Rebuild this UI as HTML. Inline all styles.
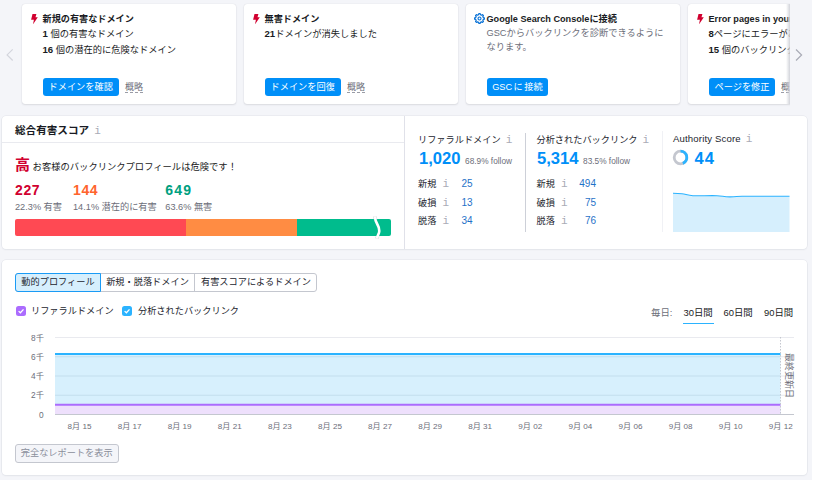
<!DOCTYPE html>
<html lang="ja"><head><meta charset="utf-8">
<style>
*{box-sizing:border-box;margin:0;padding:0}
html,body{width:815px;height:480px;overflow:hidden;background:#f4f5f9;font-family:"Liberation Sans","Noto Sans CJK JP",sans-serif;color:#191b23;font-size:10px}
.abs{position:absolute}
.card{position:absolute;top:4px;height:100.200px;width:214px;background:#fff;border-radius:3px;box-shadow:0 0 1px rgba(25,27,35,.16),0 1px 2px rgba(25,27,35,.10)}
.card .t{position:absolute;left:20.500px;top:8.800px;font-weight:bold;font-size:9.150px;line-height:12px;white-space:nowrap}
.card .l{position:absolute;left:20.500px;margin-top:.4px;font-size:9.250px;line-height:12px;white-space:nowrap}
.card .l b{font-weight:bold;font-size:9.600px}
.card svg.ic{position:absolute;left:8.700px;top:9.700px}
.btn{position:absolute;left:20.700px;top:74.300px;height:18.200px;background:#008ff8;color:#fff;border-radius:3px;font-size:9.200px;line-height:18.200px;padding:0;text-align:center;white-space:nowrap}
.lnk{position:absolute;top:74px;font-size:9px;line-height:18px;color:#6c6e79;white-space:nowrap}
.lnk span{border-bottom:1px dashed #9a9ca6;padding-bottom:0}
.panel{position:absolute;background:#fff;border-radius:4px;box-shadow:0 0 0 .6px #e1e3ea,0 1px 2px rgba(25,27,35,.06)}
.i{color:#a9abb6;font-family:"Liberation Mono",monospace;font-size:11px;line-height:10px;font-weight:normal}
.blue{color:#006dca}
.g{color:#6c6e79}
.num{font-weight:bold;font-size:14px;line-height:16px;white-space:nowrap;letter-spacing:.6px}
.sub{font-size:9.200px;line-height:12px;white-space:nowrap}
.lab{font-size:9.200px;line-height:14px;white-space:nowrap;color:#23252e}
.big{font-size:16.600px;font-weight:bold;line-height:20px;white-space:nowrap;color:#008ff8}
.fol{font-size:8.300px;font-weight:normal;color:#6c6e79;margin-left:4.500px}
.val{font-size:10px;line-height:14px;text-align:right;color:#1f72c8}
.tab{top:273px;text-align:center;font-size:9.200px;line-height:18.500px;white-space:nowrap;color:#23252e}
.per{top:306.400px;font-size:9.400px;line-height:13px;white-space:nowrap}
</style></head><body>
<!-- top cards -->
<div class="card" style="left:22px">
 <svg class="ic" width="7" height="10.500" viewBox="0 0 7 10.500"><path d="M1.500 0H5.400L4.500 3.200H6.800L2 10.400L2.900 5.800H.1z" fill="#d1002f"/></svg>
 <div class="t">新規の有害なドメイン</div>
 <div class="l" style="top:24px"><b>1</b> 個の有害なドメイン</div>
 <div class="l" style="top:40px"><b>16</b> 個の潜在的に危険なドメイン</div>
 <div class="btn" style="width:76px">ドメインを確認</div><div class="lnk" style="left:103px"><span>概略</span></div>
</div>
<div class="card" style="left:244px">
 <svg class="ic" width="7" height="10.500" viewBox="0 0 7 10.500"><path d="M1.500 0H5.400L4.500 3.200H6.800L2 10.400L2.900 5.800H.1z" fill="#d1002f"/></svg>
 <div class="t">無害ドメイン</div>
 <div class="l" style="top:24px"><b>21</b>ドメインが消失しました</div>
 <div class="btn" style="width:76px">ドメインを回復</div><div class="lnk" style="left:103px"><span>概略</span></div>
</div>
<div class="card" style="left:466px">
 <svg class="ic" width="11" height="11" viewBox="0 0 11 11" style="left:8px;top:9.200px"><path d="M4.56 1.72L4.82 0.65L6.18 0.65L6.44 1.72L7.51 2.16L8.45 1.59L9.41 2.55L8.84 3.49L9.28 4.56L10.35 4.82L10.35 6.18L9.28 6.44L8.84 7.51L9.41 8.45L8.45 9.41L7.51 8.84L6.44 9.28L6.18 10.35L4.82 10.35L4.56 9.28L3.49 8.84L2.55 9.41L1.59 8.45L2.16 7.51L1.72 6.44L0.65 6.18L0.65 4.82L1.72 4.56L2.16 3.49L1.59 2.55L2.55 1.59L3.49 2.16Z" fill="none" stroke="#0a72d6" stroke-width="1.250" stroke-linejoin="round"/><circle cx="5.500" cy="5.500" r="1.500" fill="none" stroke="#0a72d6" stroke-width="1.100"/></svg>
 <div class="t">Google Search Consoleに接続</div>
 <div class="l g" style="top:21.800px;line-height:14px;color:#6c6e79">GSCからバックリンクを診断できるように<br>なります。</div>
 <div class="btn" style="width:61.500px;word-spacing:-1px">GSC に 接続</div>
</div>
<div class="card" style="left:688px;width:140px">
 <svg class="ic" width="7" height="10.500" viewBox="0 0 7 10.500"><path d="M1.500 0H5.400L4.500 3.200H6.800L2 10.400L2.900 5.800H.1z" fill="#d1002f"/></svg>
 <div class="t">Error pages in your site</div>
 <div class="l" style="top:24px"><b>8</b>ページにエラーがあります</div>
 <div class="l" style="top:40px"><b>15</b> 個のバックリンクが</div>
 <div class="btn" style="width:66.700px">ページを修正</div><div class="lnk" style="left:93px"><span>概略</span></div>
</div>
<div class="abs" style="left:786.300px;top:4px;width:3.300px;height:100px;background:linear-gradient(90deg,rgba(215,216,222,0) 0,rgba(205,207,214,.9) 100%)"></div><div class="abs" style="left:789.600px;top:0;width:26px;height:108px;background:#f4f5f9"></div>
<div class="abs" style="left:811.800px;top:0;width:4px;height:480px;background:#fff"></div>
<svg class="abs" style="left:6px;top:48px" width="9" height="14" viewBox="0 0 9 14"><path d="M6.700 1.300L1.100 6.900L6.700 12.500" fill="none" stroke="#d3d5dd" stroke-width="1.200"/></svg>
<svg class="abs" style="left:794px;top:48px" width="10" height="14" viewBox="0 0 10 14"><path d="M2 1.500L7.600 7L2 12.500" fill="none" stroke="#a9abb6" stroke-width="1.200"/></svg>

<!-- middle panel -->
<div class="panel" style="left:2px;top:116.300px;width:805.200px;height:132.900px"></div>
<div class="abs" style="left:2px;top:142px;width:402px;height:1px;background:#e9eaef"></div>
<div class="abs" style="left:404px;top:116.300px;width:1px;height:132.900px;background:#e0e1e9"></div>
<div class="abs" style="left:15px;top:122.500px;font-weight:bold;font-size:10.600px;line-height:14px;white-space:nowrap">総合有害スコア<span class="i" style="font-weight:normal;margin-left:5px">i</span></div>
<div class="abs" style="left:15px;top:155px;font-size:9.300px;line-height:20px;white-space:nowrap"><b style="color:#d1002f;font-size:15px">高</b> お客様のバックリンクプロフィールは危険です！</div>
<div class="abs num" style="left:15px;top:182px;color:#d1002f">227</div>
<div class="abs num" style="left:73px;top:182px;color:#ff642d">144</div>
<div class="abs num" style="left:165.300px;top:182px;color:#009f81;letter-spacing:1.200px">649</div>
<div class="abs g sub" style="left:15px;top:201px">22.3% 有害</div>
<div class="abs g sub" style="left:73px;top:201px">14.1% 潜在的に有害</div>
<div class="abs g sub" style="left:165.300px;top:201px">63.6% 無害</div>
<div class="abs" style="left:15px;top:219.200px;width:171px;height:17px;background:#ff4953;border-radius:2px 0 0 2px"></div>
<div class="abs" style="left:186px;top:219.200px;width:111px;height:17px;background:#ff8c43"></div>
<div class="abs" style="left:297px;top:219.200px;width:94px;height:17px;background:#00bc8d;border-radius:0 2px 2px 0"></div>
<svg class="abs" style="left:368px;top:214px" width="18" height="27" viewBox="0 0 18 27"><defs><clipPath id="cp"><rect x="0" y="0" width="18" height="5.200"/><rect x="0" y="22.200" width="18" height="6"/></clipPath></defs><path id="sq" d="M7 2.500C7 10 11.500 10.500 11.300 17C11.200 20 9.500 21 9 24.500" fill="none" stroke="#d0d2d9" stroke-width="3.600" clip-path="url(#cp)"/><path d="M7 2.500C7 10 11.500 10.500 11.300 17C11.200 20 9.500 21 9 24.500" fill="none" stroke="#fff" stroke-width="2.600"/></svg>

<!-- stats -->
<div class="abs lab" style="left:418px;top:132.500px">リファラルドメイン<span class="i" style="margin-left:5px">i</span></div>
<div class="abs big" style="left:419px;top:149px">1,020<span class="fol">68.9% follow</span></div>
<div class="abs lab" style="left:418px;top:177px">新規<span class="i" style="margin-left:6px">i</span></div>
<div class="abs lab" style="left:418px;top:195.500px">破損<span class="i" style="margin-left:6px">i</span></div>
<div class="abs lab" style="left:418px;top:214px">脱落<span class="i" style="margin-left:6px">i</span></div>
<div class="abs val" style="left:432.500px;width:40px;top:177px">25</div>
<div class="abs val" style="left:432.500px;width:40px;top:195.500px">13</div>
<div class="abs val" style="left:432.500px;width:40px;top:214px">34</div>
<div class="abs" style="left:525px;top:132.500px;width:1px;height:99.500px;background:#cdd0d8"></div>
<div class="abs" style="left:661.500px;top:131px;width:1px;height:101px;background:#f0f1f5"></div>
<div class="abs lab" style="left:536.500px;top:132.500px">分析されたバックリンク<span class="i" style="margin-left:5px">i</span></div>
<div class="abs big" style="left:537px;top:149px">5,314<span class="fol">83.5% follow</span></div>
<div class="abs lab" style="left:536.500px;top:177px">新規<span class="i" style="margin-left:6px">i</span></div>
<div class="abs lab" style="left:536.500px;top:195.500px">破損<span class="i" style="margin-left:6px">i</span></div>
<div class="abs lab" style="left:536.500px;top:214px">脱落<span class="i" style="margin-left:6px">i</span></div>
<div class="abs val" style="left:556px;width:40px;top:177px">494</div>
<div class="abs val" style="left:556px;width:40px;top:195.500px">75</div>
<div class="abs val" style="left:556px;width:40px;top:214px">76</div>
<div class="abs lab" style="left:673px;top:132px;font-size:9.600px;letter-spacing:.15px">Authority Score<span class="i" style="margin-left:5px">i</span></div>
<svg class="abs" style="left:672px;top:148.800px" width="17" height="17" viewBox="0 0 17 17"><circle cx="8.500" cy="8.500" r="6.300" fill="none" stroke="#c4c7cf" stroke-width="2.800"/><path d="M8.500 2.200A6.300 6.300 0 0 1 10.840 14.350" fill="none" stroke="#2bb3ff" stroke-width="2.800"/></svg>
<div class="abs big" style="left:694.500px;top:149px;letter-spacing:1px">44</div>
<svg class="abs" style="left:673px;top:188px" width="117" height="44" viewBox="0 0 117 44"><path d="M0 5.200C4 5.200 6 5.300 9 5.700C13 6.300 15 7.500 20 7.700S38 7.500 44 7.700S50 8.900 57 8.900S63 8.300 69 8.200S100 8.300 116.500 8.300V44H0z" fill="#d6effd"/><path d="M0 5.200C4 5.200 6 5.300 9 5.700C13 6.300 15 7.500 20 7.700S38 7.500 44 7.700S50 8.900 57 8.900S63 8.300 69 8.200S100 8.300 116.500 8.300" fill="none" stroke="#2bb3ff" stroke-width="1.100"/></svg>

<!-- bottom panel -->
<div class="panel" style="left:2px;top:260.400px;width:805.200px;height:215px"></div>
<div class="abs" style="left:15px;top:273px;height:18.500px;width:302px;border:1px solid #c4c7cf;border-radius:3px;background:#fff"></div>
<div class="abs" style="left:15px;top:273px;height:18.500px;width:86px;border:1px solid #1a9bf5;border-radius:3px 0 0 3px;background:#d6effd"></div>
<div class="abs" style="left:194px;top:273px;height:18.500px;width:1px;background:#c4c7cf"></div>
<div class="abs tab" style="left:15px;width:86px">動的プロフィール</div>
<div class="abs tab" style="left:101px;width:93px">新規・脱落ドメイン</div>
<div class="abs tab" style="left:195px;width:122px">有害スコアによるドメイン</div>

<div class="abs" style="left:15.500px;top:306px;width:10px;height:10px;border-radius:2.500px;background:#ab6cfe"></div>
<svg class="abs" style="left:15.500px;top:306px" width="10" height="10" viewBox="0 0 10 10"><path d="M2.600 5.100l1.800 1.700 3.100-3.400" fill="none" stroke="#fff" stroke-width="1.300"/></svg>
<div class="abs lab" style="left:31px;top:304.500px;line-height:13px">リファラルドメイン</div>
<div class="abs" style="left:122px;top:306px;width:10px;height:10px;border-radius:2.500px;background:#2bb3ff"></div>
<svg class="abs" style="left:122px;top:306px" width="10" height="10" viewBox="0 0 10 10"><path d="M2.600 5.100l1.800 1.700 3.100-3.400" fill="none" stroke="#fff" stroke-width="1.300"/></svg>
<div class="abs lab" style="left:138px;top:304.500px;line-height:13px">分析されたバックリンク</div>

<div class="abs g per" style="left:651px">毎日:</div>
<div class="abs per" style="left:683.500px">30日間</div>
<div class="abs" style="left:683px;top:322.600px;width:30.500px;height:1.500px;background:#2bb3ff"></div>
<div class="abs per" style="left:723.500px">60日間</div>
<div class="abs per" style="left:764px">90日間</div>

<!-- chart -->
<svg class="abs" style="left:0;top:325px" width="815" height="115" viewBox="0 0 815 115">
 <g stroke="#e9eaef" stroke-width="1"><path d="M55 12.500H794M55 31.750H794M55 51H794M55 70.250H794"/></g>
 <rect x="55" y="29" width="725.500" height="60.500" fill="#d7f0fd"/>
 <g stroke="#c3deed" stroke-width="1"><path d="M55 31.750H780.500M55 51H780.500M55 70.250H780.500"/></g>
 <rect x="55" y="79.700" width="725.500" height="9.800" fill="#eee0fc"/>
 <path d="M55 29H780.500" stroke="#2bb3ff" stroke-width="2"/>
 <path d="M55 79.700H780.500" stroke="#ab6cfe" stroke-width="2"/>
 <path d="M55 89.500H794" stroke="#c4c7cf" stroke-width="1"/>
 <path d="M780.500 12V89" stroke="#c4c7cf" stroke-width="1" stroke-dasharray="1.500 1.500"/>
 <g font-size="8.300" fill="#6c6e79" text-anchor="end"><text x="44" y="15.500">8千</text><text x="44" y="34.700">6千</text><text x="44" y="54">4千</text><text x="44" y="73.300">2千</text><text x="43.500" y="92.500">0</text></g>
 <g font-size="8.100" fill="#6c6e79" text-anchor="middle">
 <text x="79.5" y="104.300">8月 15</text> <text x="129.6" y="104.300">8月 17</text> <text x="179.7" y="104.300">8月 19</text> <text x="229.8" y="104.300">8月 21</text> <text x="279.9" y="104.300">8月 23</text> <text x="330.0" y="104.300">8月 25</text> <text x="380.0" y="104.300">8月 27</text> <text x="430.1" y="104.300">8月 29</text> <text x="480.2" y="104.300">8月 31</text> <text x="530.3" y="104.300">9月 02</text> <text x="580.4" y="104.300">9月 04</text> <text x="630.5" y="104.300">9月 06</text> <text x="680.6" y="104.300">9月 08</text> <text x="730.7" y="104.300">9月 10</text> <text x="780.8" y="104.300">9月 12</text>
 </g>
 <text x="0" y="0" font-size="9" fill="#6c6e79" transform="translate(786.400,28) rotate(90)">最終更新日</text>
</svg>
<div class="abs" style="left:15px;top:444px;height:18.500px;width:103.500px;text-align:center;border:1px solid #c4c7cf;border-radius:3px;background:#f4f5f9;font-size:9.200px;line-height:16.500px;white-space:nowrap;color:#8a8e9b">完全なレポートを表示</div>
</body></html>
